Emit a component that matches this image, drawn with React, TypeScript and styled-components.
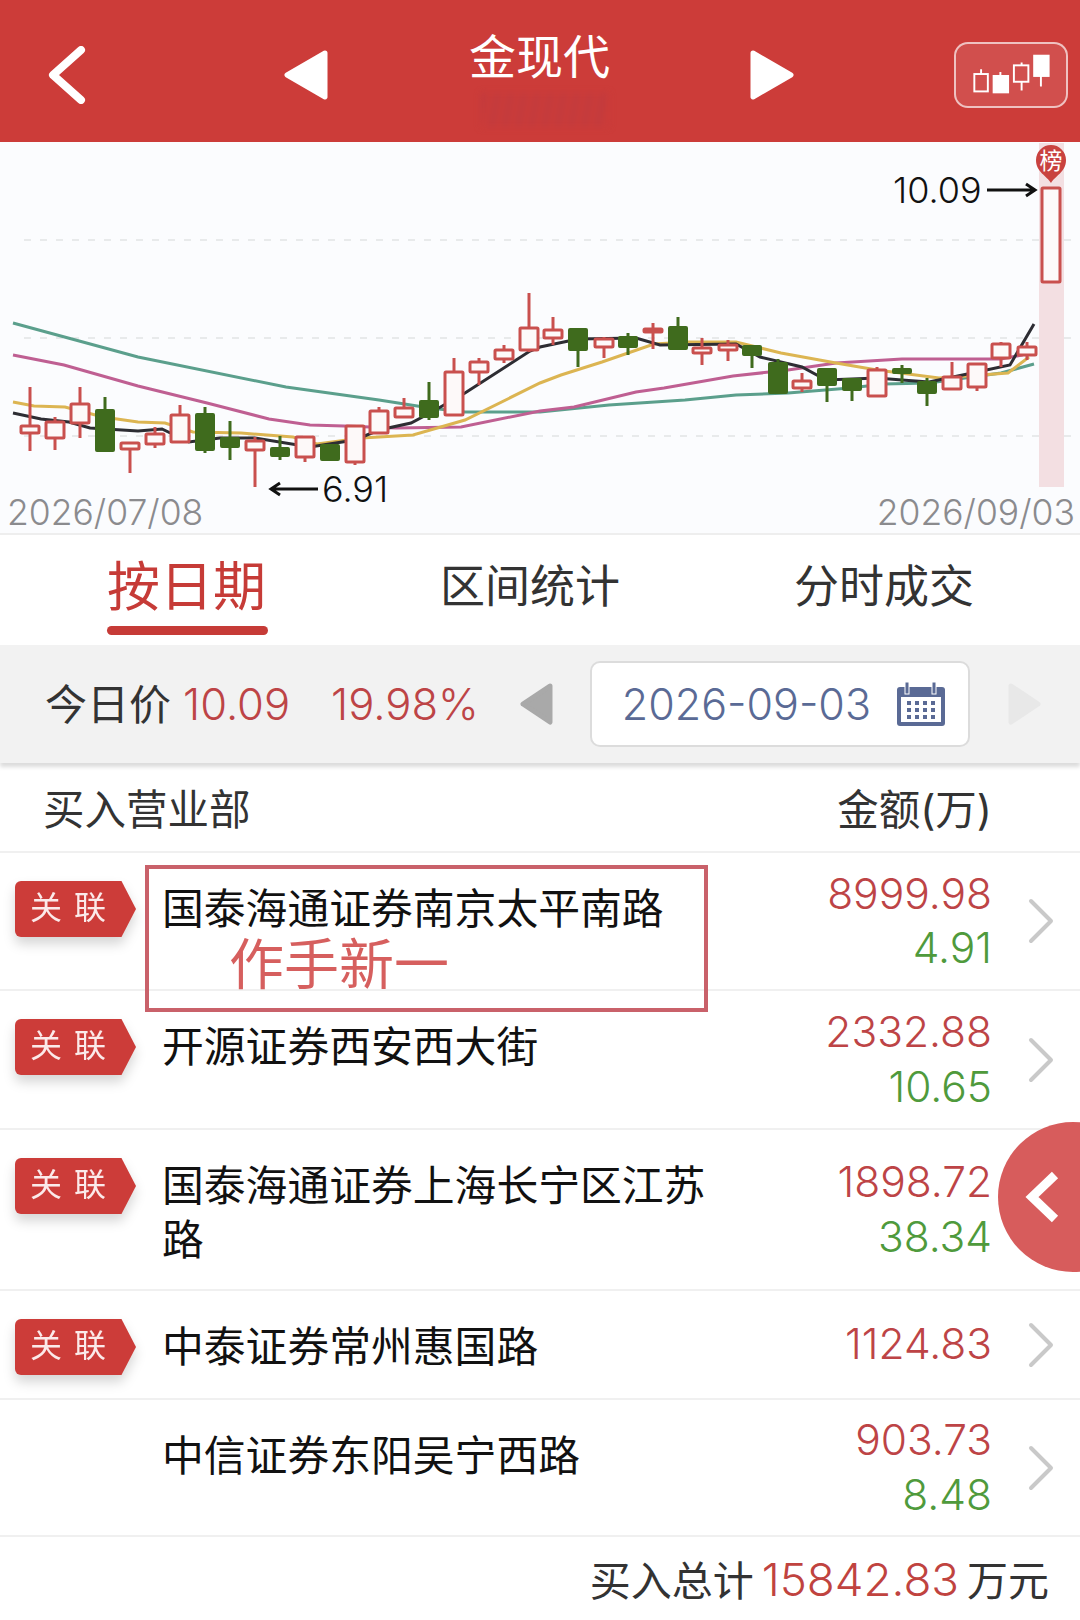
import React from "react";
import styled, { createGlobalStyle } from "styled-components";

const colors = {
  brand: "#cc3c39",
  red: "#bd4446",
  green: "#4f9a3c",
  candleRed: "#c9504e",
  candleGreen: "#3f6b1d",
  chartBg: "#fbfcfe",
  line: "#f0f0f0",
  slate: "#5a6a95",
};

const GlobalStyle = createGlobalStyle`
  html, body {
    margin: 0;
    padding: 0;
    background: #fff;
  }
  body {
    font-family: Inter, "Noto Sans CJK SC", sans-serif;
  }
`;

// [x, wickTop, wickBottom, bodyTop, bodyBottom] in page pixels
type Candle = [number, number, number, number, number];

const redCandles: Candle[] = [
  [30, 387, 451, 426, 433],
  [55, 417, 450, 422, 438],
  [80, 387, 438, 404, 423],
  [130, 443, 473, 443, 449],
  [155, 427, 448, 434, 444],
  [180, 405, 443, 415, 442],
  [255, 437, 487, 441, 450],
  [305, 436, 462, 437, 457],
  [355, 426, 465, 426, 462],
  [379, 407, 433, 411, 433],
  [404, 398, 417, 408, 417],
  [454, 358, 416, 372, 415],
  [479, 358, 385, 362, 372],
  [504, 345, 363, 350, 359],
  [529, 293, 352, 328, 350],
  [553, 317, 345, 330, 338],
  [604, 337, 358, 339, 347],
  [653, 323, 349, 329, 332],
  [702, 338, 365, 348, 353],
  [728, 340, 361, 345, 350],
  [802, 373, 392, 381, 388],
  [877, 367, 397, 370, 396],
  [952, 362, 389, 377, 389],
  [977, 363, 391, 364, 387],
  [1001, 342, 367, 344, 358],
  [1027, 342, 360, 347, 355],
  [1051, 188, 282, 188, 282],
];

const greenCandles: Candle[] = [
  [105, 397, 451, 410, 451],
  [205, 407, 453, 414, 450],
  [230, 421, 460, 438, 447],
  [280, 436, 460, 448, 456],
  [330, 445, 461, 445, 460],
  [429, 382, 420, 401, 417],
  [578, 329, 367, 329, 350],
  [628, 333, 355, 337, 347],
  [678, 317, 349, 327, 349],
  [752, 345, 368, 346, 355],
  [778, 359, 393, 363, 393],
  [827, 368, 402, 369, 385],
  [852, 378, 401, 379, 390],
  [902, 365, 383, 369, 373],
  [927, 378, 406, 382, 393],
];

const tealLine =
  "13,323 138,357 286,387 379,400 430,408 465,412 540,412 609,405 685,400 736,395 788,393 850,388 884,384 929,383 1001,373 1034,364";
const pinkLine =
  "13,355 64,365 138,386 207,403 269,419 310,425 344,426 396,428 461,427 540,411 574,407 636,392 664,388 733,376 788,370 836,363 902,359 939,359 1001,359 1022,355 1032,350";
const yellowLine =
  "13,402 34,406 65,407 103,417 138,422 165,423 193,432 241,433 293,437 317,444 362,438 413,435 465,420 540,383 561,375 602,362 654,344 688,342 736,342 781,353 836,363 877,370 939,378 1008,373 1029,357";
const blackLine =
  "13,413 41,419 69,422 90,428 138,431 162,429 189,442 220,438 255,438 310,447 355,440 379,430 411,423 430,413 465,393 530,351 540,347 578,339 636,338 660,345 736,344 760,357 802,367 826,380 877,378 902,380 929,382 977,372 1010,365 1034,324";

interface Broker {
  name: string;
  buy: string;
  sell?: string;
  height: number;
  linked: boolean;
}

const brokers: Broker[] = [
  { name: "国泰海通证券南京太平南路", buy: "8999.98", sell: "4.91", height: 138, linked: true },
  { name: "开源证券西安西大街", buy: "2332.88", sell: "10.65", height: 139, linked: true },
  { name: "国泰海通证券上海长宁区江苏路", buy: "1898.72", sell: "38.34", height: 161, linked: true },
  { name: "中泰证券常州惠国路", buy: "1124.83", height: 109, linked: true },
  { name: "中信证券东阳吴宁西路", buy: "903.73", sell: "8.48", height: 137, linked: false },
];

const Page = styled.div`
  position: relative;
  width: 1080px;
  height: 1620px;
  overflow: hidden;
  background: #fff;
`;

const TopBar = styled.header`
  display: grid;
  grid-template-columns: 236px 185px 141px 140px 204px 116px;
  align-items: center;
  height: 142px;
  padding: 8px 0 0 48px;
  box-sizing: border-box;
  background: ${colors.brand};
`;

const TitleBlock = styled.div`
  align-self: start;
  padding-top: 21px;
`;

const Title = styled.div`
  font-size: 47px;
  line-height: 56px;
  color: #fff;
  white-space: nowrap;
`;

const BlurredCode = styled.div`
  width: 128px;
  height: 34px;
  margin: 8px 0 0 12px;
  background: repeating-linear-gradient(100deg, #c23a3d 0 7px, #cc3c39 7px 13px);
  filter: blur(3px);
`;

const KlineButton = styled.div`
  width: 114px;
  height: 66px;
  box-sizing: border-box;
  border: 2px solid rgba(255, 255, 255, 0.65);
  border-radius: 14px;
  background: rgba(255, 255, 255, 0.1);
  display: flex;
  align-items: center;
  justify-content: center;
`;

const ChartPanel = styled.div`
  background: ${colors.chartBg};
  border-bottom: 2px solid #eeeeee;
  svg {
    display: block;
  }
`;

const Tabs = styled.nav`
  display: flex;
  align-items: flex-start;
  height: 110px;
  padding-left: 107px;
  gap: 174px;
  box-sizing: border-box;
`;

const Tab = styled.div<{ $active?: boolean }>`
  position: relative;
  font-size: ${(p) => (p.$active ? "53px" : "45px")};
  line-height: 104px;
  color: ${(p) => (p.$active ? "#c63b37" : "#333")};
  white-space: nowrap;

  &::after {
    content: "";
    display: ${(p) => (p.$active ? "block" : "none")};
    position: absolute;
    left: 0;
    right: -2px;
    top: 91px;
    height: 9px;
    border-radius: 5px;
    background: #c63b37;
  }
`;

const DateBar = styled.div`
  display: flex;
  align-items: center;
  height: 118px;
  padding-left: 45px;
  box-sizing: border-box;
  background: #f2f2f2;
  box-shadow: 0 4px 4px rgba(0, 0, 0, 0.14);
  position: relative;
`;

const PriceLabel = styled.span`
  font-size: 42px;
  color: #333;
  margin: 0 12px 6px 0;
`;

const PriceValue = styled.span<{ $gap: number }>`
  font-size: 43.5px;
  font-weight: 300;
  color: ${colors.red};
  margin-right: ${(p) => p.$gap}px;
`;

const DateBox = styled.div`
  display: flex;
  align-items: center;
  justify-content: space-between;
  width: 380px;
  height: 86px;
  margin: 0 38px 0 37px;
  padding: 0 23px 0 30px;
  box-sizing: border-box;
  background: #fff;
  border: 2px solid #dcdcdc;
  border-radius: 10px;
  color: ${colors.slate};
  font-size: 43px;
  font-weight: 300;
`;

const ListHeader = styled.div`
  display: flex;
  justify-content: space-between;
  align-items: center;
  height: 90px;
  padding: 0 88px 0 43px;
  box-sizing: border-box;
  border-bottom: 2px solid ${colors.line};
  font-size: 41.5px;
  color: #333;
`;

const Row = styled.div<{ $height: number }>`
  position: relative;
  display: grid;
  grid-template-columns: 147px 550px 280px 1fr;
  height: ${(p) => p.$height}px;
  padding-left: 15px;
  box-sizing: border-box;
  border-bottom: 2px solid ${colors.line};
`;

const TagWrap = styled.div`
  padding-top: 28px;
  filter: drop-shadow(0 7px 6px rgba(0, 0, 0, 0.16));
`;

const Tag = styled.div`
  width: 121px;
  height: 56px;
  padding-left: 15px;
  box-sizing: border-box;
  border-radius: 6px 0 0 6px;
  clip-path: polygon(0 0, 88% 0, 100% 50%, 88% 100%, 0 100%);
  background: ${colors.brand};
  color: #fbeaea;
  font-size: 32px;
  line-height: 54px;
  letter-spacing: 12px;
  white-space: nowrap;
`;

const Name = styled.div`
  padding-top: 29px;
  font-size: 41.8px;
  line-height: 54px;
  color: #111;
`;

const Values = styled.div`
  align-self: center;
  text-align: right;
  font-size: 42.5px;
  font-weight: 300;
  line-height: 54.5px;
`;

const Value = styled.div<{ $tone: "red" | "green" }>`
  color: ${(p) => (p.$tone === "red" ? colors.red : colors.green)};
`;

const ChevronCell = styled.div`
  align-self: center;
  display: flex;
  padding-left: 36px;
`;

const Annotation = styled.div`
  position: absolute;
  left: 145px;
  top: 12px;
  width: 563px;
  height: 147px;
  box-sizing: border-box;
  border: 4px solid #c9616a;
  padding: 64px 0 0 80px;
  font-size: 55px;
  line-height: 62px;
  color: #d65f5e;
  z-index: 2;
`;

const Total = styled.div`
  display: flex;
  justify-content: flex-end;
  align-items: baseline;
  gap: 8px;
  padding: 11px 31px 0 0;
  font-size: 41px;
  color: #333;
`;

const TotalValue = styled.span`
  font-size: 45.7px;
  font-weight: 300;
  color: #c0433f;
`;

const FloatingButton = styled.div`
  position: absolute;
  left: 998px;
  top: 1122px;
  width: 150px;
  height: 150px;
  border-radius: 50%;
  background: #d75c5c;
  display: flex;
  align-items: center;
  padding-left: 26px;
  box-sizing: border-box;
  z-index: 3;
`;

const Triangle: React.FC<{ dir: "left" | "right"; color: string; w: number; h: number }> = ({ dir, color, w, h }) => (
  <svg width={w} height={h} viewBox={`0 0 ${w} ${h}`}>
    <polygon
      points={dir === "left" ? `${w - 3},3 3,${h / 2} ${w - 3},${h - 3}` : `3,3 ${w - 3},${h / 2} 3,${h - 3}`}
      fill={color}
      stroke={color}
      strokeWidth={5}
      strokeLinejoin="round"
    />
  </svg>
);

const KlineIcon = () => (
  <svg width="114" height="66" viewBox="956 42 114 66" fill="none" stroke="#fff" strokeWidth="2">
    <path d="M982 69v5M1024 62v3M1024 82v9M1044 76v11M1002 72v4" />
    <rect x="975" y="74" width="14" height="18" />
    <rect x="995" y="76" width="15" height="17" fill="#fff" />
    <rect x="1016" y="65" width="15" height="17" />
    <rect x="1037" y="55" width="15" height="21" fill="#fff" />
  </svg>
);

const CalendarIcon = () => (
  <svg width="48" height="44" viewBox="0 0 48 44">
    <rect x="0" y="5" width="48" height="39" rx="3" fill={colors.slate} />
    <rect x="4" y="15" width="40" height="25" fill="#fff" />
    <rect x="8" y="0" width="4" height="12" fill={colors.slate} stroke="#fff" strokeWidth="1" />
    <rect x="35" y="0" width="4" height="12" fill={colors.slate} stroke="#fff" strokeWidth="1" />
    {[19, 26, 33].map((y) =>
      [10, 18, 26, 34].map((x) => <rect key={`${x}-${y}`} x={x} y={y} width="4" height="4" fill={colors.slate} />)
    )}
  </svg>
);

const CandleChart = () => (
  <svg width="1080" height="391" viewBox="0 142 1080 391" fontFamily="Inter, sans-serif" fontWeight="300">
    {[240, 338, 436].map((y) => (
      <line key={y} x1="24" x2="1080" y1={y} y2={y} stroke="#e2e3e5" strokeWidth="1.5" strokeDasharray="7 9" />
    ))}
    <rect x="1039" y="143" width="25" height="344" fill="#f3dfe2" />

    <polyline points={tealLine} fill="none" stroke="#5b9f8c" strokeWidth="3" />
    <polyline points={pinkLine} fill="none" stroke="#bf5f92" strokeWidth="3" />
    <polyline points={yellowLine} fill="none" stroke="#dcb552" strokeWidth="3" />
    <polyline points={blackLine} fill="none" stroke="#2d2d33" strokeWidth="3" />

    {greenCandles.map(([x, wt, wb, bt, bb]) => (
      <g key={x} fill={colors.candleGreen} stroke={colors.candleGreen}>
        <line x1={x} x2={x} y1={wt} y2={wb} strokeWidth="3" />
        <rect x={x - 9} y={bt} width="18" height={bb - bt} strokeWidth="2" rx="1" />
      </g>
    ))}
    {redCandles.map(([x, wt, wb, bt, bb]) => (
      <g key={x} stroke={colors.candleRed} strokeWidth="3">
        <line x1={x} x2={x} y1={wt} y2={wb} />
        <rect x={x - 9} y={bt} width="18" height={bb - bt} fill="#fdf9f9" rx="1" />
      </g>
    ))}

    <path d="M1051 183c-4-7-15-11-15-23a15 15 0 0 1 30 0c0 12-11 16-15 23z" fill="#c9423f" />
    <text x="1051" y="169" textAnchor="middle" fontSize="23" fill="#fff" fontWeight="400" fontFamily="'Noto Sans CJK SC', sans-serif">
      榜
    </text>

    <text x="893" y="203" fontSize="36" fill="#111">10.09</text>
    <path d="M987 190h48M1026 184l9 6-9 6" fill="none" stroke="#111" strokeWidth="3" />
    <text x="322" y="502" fontSize="36" fill="#111">6.91</text>
    <path d="M318 489h-47M280 483l-9 6 9 6" fill="none" stroke="#111" strokeWidth="3" />

    <text x="7" y="525" fontSize="35.5" fill="#8b8b8e">2026/07/08</text>
    <text x="1075" y="525" fontSize="35.5" fill="#8b8b8e" textAnchor="end">2026/09/03</text>
  </svg>
);

const Chevron = () => (
  <svg width="26" height="46" viewBox="0 0 26 46" fill="none" stroke="#c9c9c9" strokeWidth="4" strokeLinecap="round" strokeLinejoin="round">
    <path d="M3 3l20 20L3 43" />
  </svg>
);

const App: React.FC = () => (
  <Page>
    <GlobalStyle />
    <TopBar>
      <svg width="38" height="58" viewBox="0 0 38 58" fill="none" stroke="#fff" strokeWidth="8" strokeLinecap="round" strokeLinejoin="round">
        <path d="M33 4L5 29l28 25" />
      </svg>
      <Triangle dir="left" color="#fff" w={44} h={50} />
      <TitleBlock>
        <Title>金现代</Title>
        <BlurredCode />
      </TitleBlock>
      <span />
      <Triangle dir="right" color="#fff" w={44} h={50} />
      <KlineButton>
        <KlineIcon />
      </KlineButton>
    </TopBar>

    <ChartPanel>
      <CandleChart />
    </ChartPanel>

    <Tabs>
      <Tab $active>按日期</Tab>
      <Tab>区间统计</Tab>
      <Tab>分时成交</Tab>
    </Tabs>

    <DateBar>
      <PriceLabel>今日价</PriceLabel>
      <PriceValue $gap={41}>10.09</PriceValue>
      <PriceValue $gap={41}>19.98%</PriceValue>
      <Triangle dir="left" color="#a9a9a9" w={33} h={42} />
      <DateBox>
        2026-09-03
        <CalendarIcon />
      </DateBox>
      <Triangle dir="right" color="#e8e8e8" w={33} h={42} />
    </DateBar>

    <ListHeader>
      <span>买入营业部</span>
      <span>金额(万)</span>
    </ListHeader>

    {brokers.map((b, i) => (
      <Row key={b.name} $height={b.height}>
        <TagWrap>{b.linked && <Tag>关联</Tag>}</TagWrap>
        <Name>{b.name}</Name>
        <Values>
          <Value $tone="red">{b.buy}</Value>
          {b.sell && <Value $tone="green">{b.sell}</Value>}
        </Values>
        <ChevronCell>
          <Chevron />
        </ChevronCell>
        {i === 0 && <Annotation>作手新一</Annotation>}
      </Row>
    ))}

    <Total>
      买入总计
      <TotalValue>15842.83</TotalValue>
      万元
    </Total>

    <FloatingButton>
      <svg width="36" height="52" viewBox="0 0 36 52" fill="none" stroke="#fff" strokeWidth="9">
        <path d="M31 4L8 26l23 22" />
      </svg>
    </FloatingButton>
  </Page>
);

export default App;
